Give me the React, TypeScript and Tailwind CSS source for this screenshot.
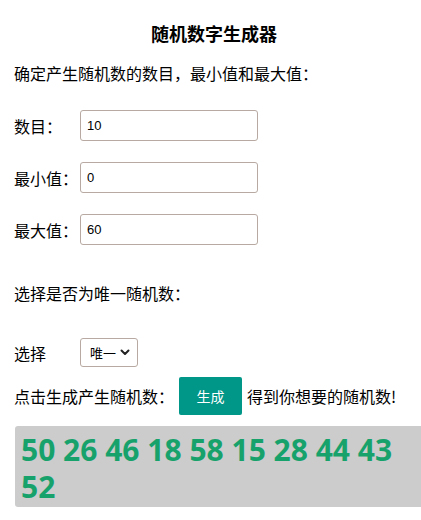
import { useState } from 'react';

const cjk = { fontFamily: '"Microsoft YaHei", "Noto Sans CJK SC", sans-serif' };

function Field({ label, value }: { label: string; value: string }) {
  return (
    <div className="flex items-center h-[31px]">
      <span className="w-[66px] text-[16px] leading-[24px]">{label}</span>
      <input
        defaultValue={value}
        className="w-[178px] h-[31px] border border-[#b8aaa2] rounded-[3px] pl-[6px] text-[13px] text-black outline-none"
        style={{ fontFamily: '"Liberation Sans", Arial, sans-serif' }}
      />
    </div>
  );
}

export default function App() {
  const [nums] = useState('50 26 46 18 58 15 28 44 43 52');

  return (
    <div className="w-[421px] min-h-[520px] bg-white text-black flex flex-col pl-[14px] overflow-hidden" style={cjk}>
      <h1 className="mt-[21px] h-[24px] leading-[24px] text-[18px] font-bold text-center pr-[7px]">
        随机数字生成器
      </h1>

      <p className="mt-[16px] h-[24px] leading-[24px] text-[16px]">确定产生随机数的数目，最小值和最大值：</p>

      <div className="mt-[25px] flex flex-col gap-[21px]">
        <Field label="数目：" value="10" />
        <Field label="最小值：" value="0" />
        <Field label="最大值：" value="60" />
      </div>

      <p className="mt-[36px] h-[24px] leading-[24px] text-[16px]">选择是否为唯一随机数：</p>

      <div className="mt-[33px] flex items-center h-[29px]">
        <span className="w-[66px] text-[16px] leading-[24px]">选择</span>
        <div className="relative">
          <select
            defaultValue="unique"
            className="appearance-none w-[58px] h-[29px] border border-[#b8aaa2] rounded-[3px] pl-[9px] text-[13px] bg-white outline-none"
          >
            <option value="unique">唯一</option>
            <option value="repeat">重复</option>
          </select>
          <svg
            className="absolute right-[8px] top-[11px] pointer-events-none"
            width="10"
            height="7"
            viewBox="0 0 10 7"
            fill="none"
          >
            <path d="M1.5 1.5L5 5l3.5-3.5" stroke="#222" strokeWidth="2" strokeLinecap="round" strokeLinejoin="round" />
          </svg>
        </div>
      </div>

      <div className="mt-[10px] flex items-center h-[38px] text-[16px]">
        <span>点击生成产生随机数：</span>
        <button className="ml-[5px] w-[63px] h-[38px] bg-[#009688] text-white text-[14px] rounded-[2px]">
          生成
        </button>
        <span className="ml-[5px]">得到你想要的随机数!</span>
      </div>

      <div
        className="mt-[11px] ml-[1px] bg-[#cccccc] rounded-l-[3px] pl-[6px] pt-[5px] pb-[2px] text-[30px] leading-[37px] font-bold text-[#17a26c]"
        style={{ fontFamily: '"Open Sans", "Noto Sans", sans-serif' }}
      >
        {nums}
      </div>
    </div>
  );
}
